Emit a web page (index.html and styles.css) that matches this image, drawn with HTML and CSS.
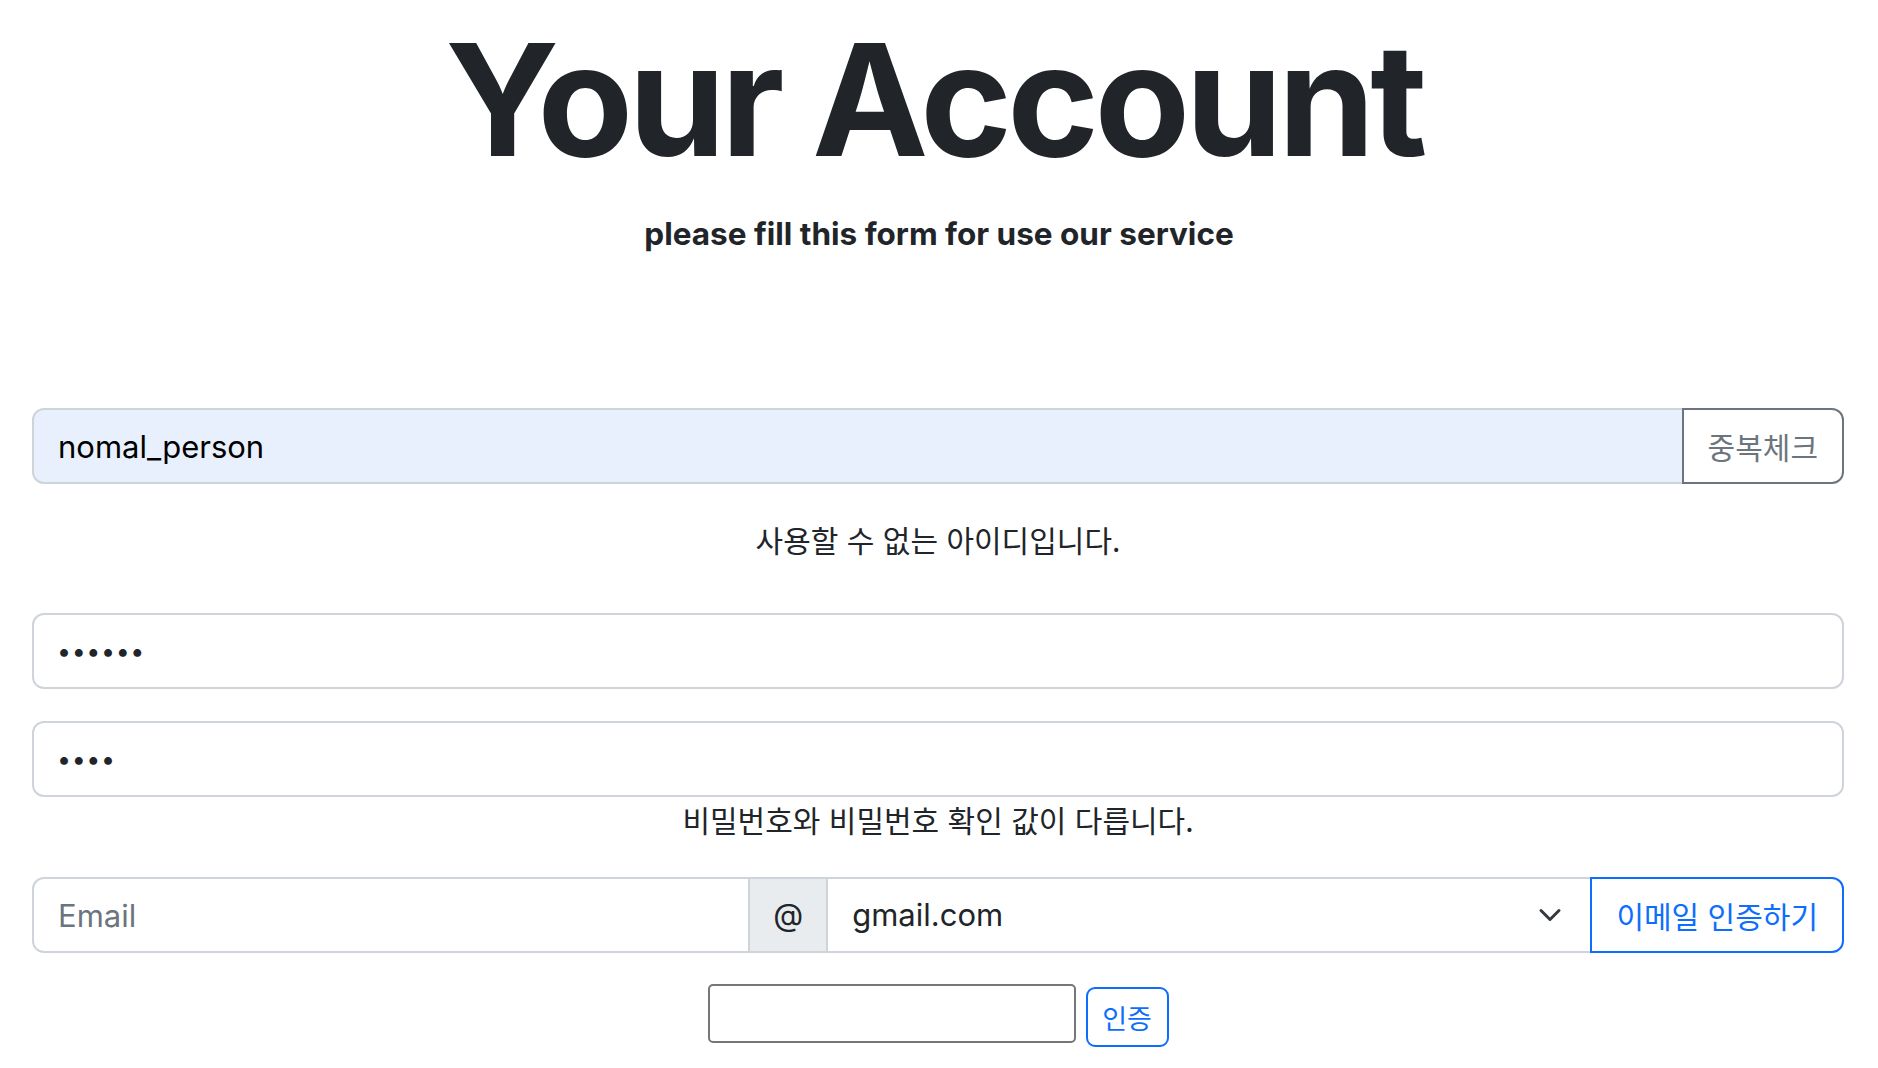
FILE: index.html
```html
<!DOCTYPE html>
<html lang="ko">
<head>
<meta charset="utf-8">
<title>Your Account</title>
<link rel="stylesheet" href="styles.css">
</head>
<body>
<h1 class="title">Your Account</h1>
<p class="subtitle">please fill this form for use our service</p>
<form class="form">
  <div class="group">
    <input class="field field-first field-autofill" type="text" value="nomal_person">
    <button class="btn btn-outline-secondary btn-last" type="button">중복체크</button>
  </div>
  <p class="msg msg-id">사용할 수 없는 아이디입니다.</p>
  <input class="field field-password" type="password" value="123456">
  <input class="field field-password field-confirm" type="password" value="1234">
  <p class="msg msg-pw">비밀번호와 비밀번호 확인 값이 다릅니다.</p>
  <div class="group">
    <input class="field field-first field-email" type="text" placeholder="Email">
    <span class="addon">@</span>
    <div class="field select">
      <span>gmail.com</span>
      <svg class="chevron" width="32" height="24" viewBox="0 0 32 24"><path d="M7 7.5 L16 16.5 L25 7.5" fill="none" stroke="#343a40" stroke-width="3" stroke-linecap="round" stroke-linejoin="round"/></svg>
    </div>
    <button class="btn btn-outline-primary btn-last" type="button">이메일 인증하기</button>
  </div>
  <div class="verify">
    <input class="code" type="text">
    <button class="btn-sm" type="button">인증</button>
  </div>
</form>
</body>
</html>
```
FILE: styles.css
```css
* { box-sizing: border-box; }

body {
  margin: 0;
  font-family: Inter, "Noto Sans CJK KR", sans-serif;
  color: #212529;
  background: #fff;
}

.title {
  margin: 6px 0 0;
  padding-right: 10px;
  text-align: center;
  font-size: 156px;
  font-weight: 700;
  line-height: 1.2;
  letter-spacing: -0.03em;
}

.subtitle {
  margin: 17px 0 0;
  text-align: center;
  font-size: 31.5px;
  font-weight: 700;
  line-height: 48px;
}

.form {
  margin: 150px 34px 0 32px;
  display: flex;
  flex-direction: column;
}

.group {
  display: flex;
  align-items: stretch;
}

.field {
  display: block;
  width: 100%;
  height: 76px;
  margin: 0;
  padding: 12px 24px;
  font-family: Inter, "Noto Sans CJK KR", sans-serif;
  font-size: 31px;
  line-height: 48px;
  color: #212529;
  background: #fff;
  border: 2px solid #ced4da;
  border-radius: 12px;
  outline: none;
}

.field::placeholder { color: #6c757d; }

.field-first {
  flex: 1 1 0;
  min-width: 0;
  border-radius: 12px 0 0 12px;
}

.field-autofill {
  background: #e8f0fe;
  color: #000;
}

.field-password {
  font-size: 25px;
  padding-left: 23px;
  letter-spacing: 0.6px;
}

.field-confirm { margin-top: 32px; }

.field-email {
  flex: 1 1 100px;
}

.addon {
  display: flex;
  align-items: center;
  margin-left: -2px;
  padding: 12px 23px;
  font-size: 31px;
  line-height: 48px;
  background: #e9ecef;
  border: 2px solid #ced4da;
}

.select {
  flex: 1 1 148px;
  min-width: 0;
  display: flex;
  align-items: center;
  justify-content: space-between;
  margin-left: -2px;
  border-radius: 0;
  padding-right: 24px;
}

.chevron { flex: none; }

.btn {
  margin: 0 0 0 -2px;
  padding: 12px 24px;
  font-family: "Noto Sans CJK KR", sans-serif;
  font-size: 30px;
  line-height: 48px;
  background: #fff;
  border: 2px solid;
  border-radius: 0 12px 12px 0;
  white-space: nowrap;
  position: relative;
}

.btn-outline-secondary {
  color: #6c757d;
  border-color: #6c757d;
}

.btn-outline-primary {
  color: #0d6efd;
  border-color: #0d6efd;
}

.msg {
  margin: 0;
  text-align: center;
  font-family: "Noto Sans CJK KR", sans-serif;
  font-size: 30px;
}

.msg-id {
  line-height: 48px;
  margin: 31px 0 50px;
}

.msg-pw {
  line-height: 36px;
  margin: 4px 0 40px;
}

.verify {
  display: flex;
  justify-content: center;
  align-items: flex-start;
  gap: 10px;
  margin-top: 31px;
}

.code {
  width: 368px;
  height: 59px;
  margin: 0;
  border: 2px solid #767676;
  border-radius: 5px;
  background: #fff;
  font-size: 26px;
  outline: none;
}

.btn-sm {
  margin: 3px 0 0;
  width: 83px;
  height: 60px;
  padding: 0;
  font-family: "Noto Sans CJK KR", sans-serif;
  font-size: 27px;
  color: #0d6efd;
  background: #fff;
  border: 2px solid #0d6efd;
  border-radius: 9px;
}
```
